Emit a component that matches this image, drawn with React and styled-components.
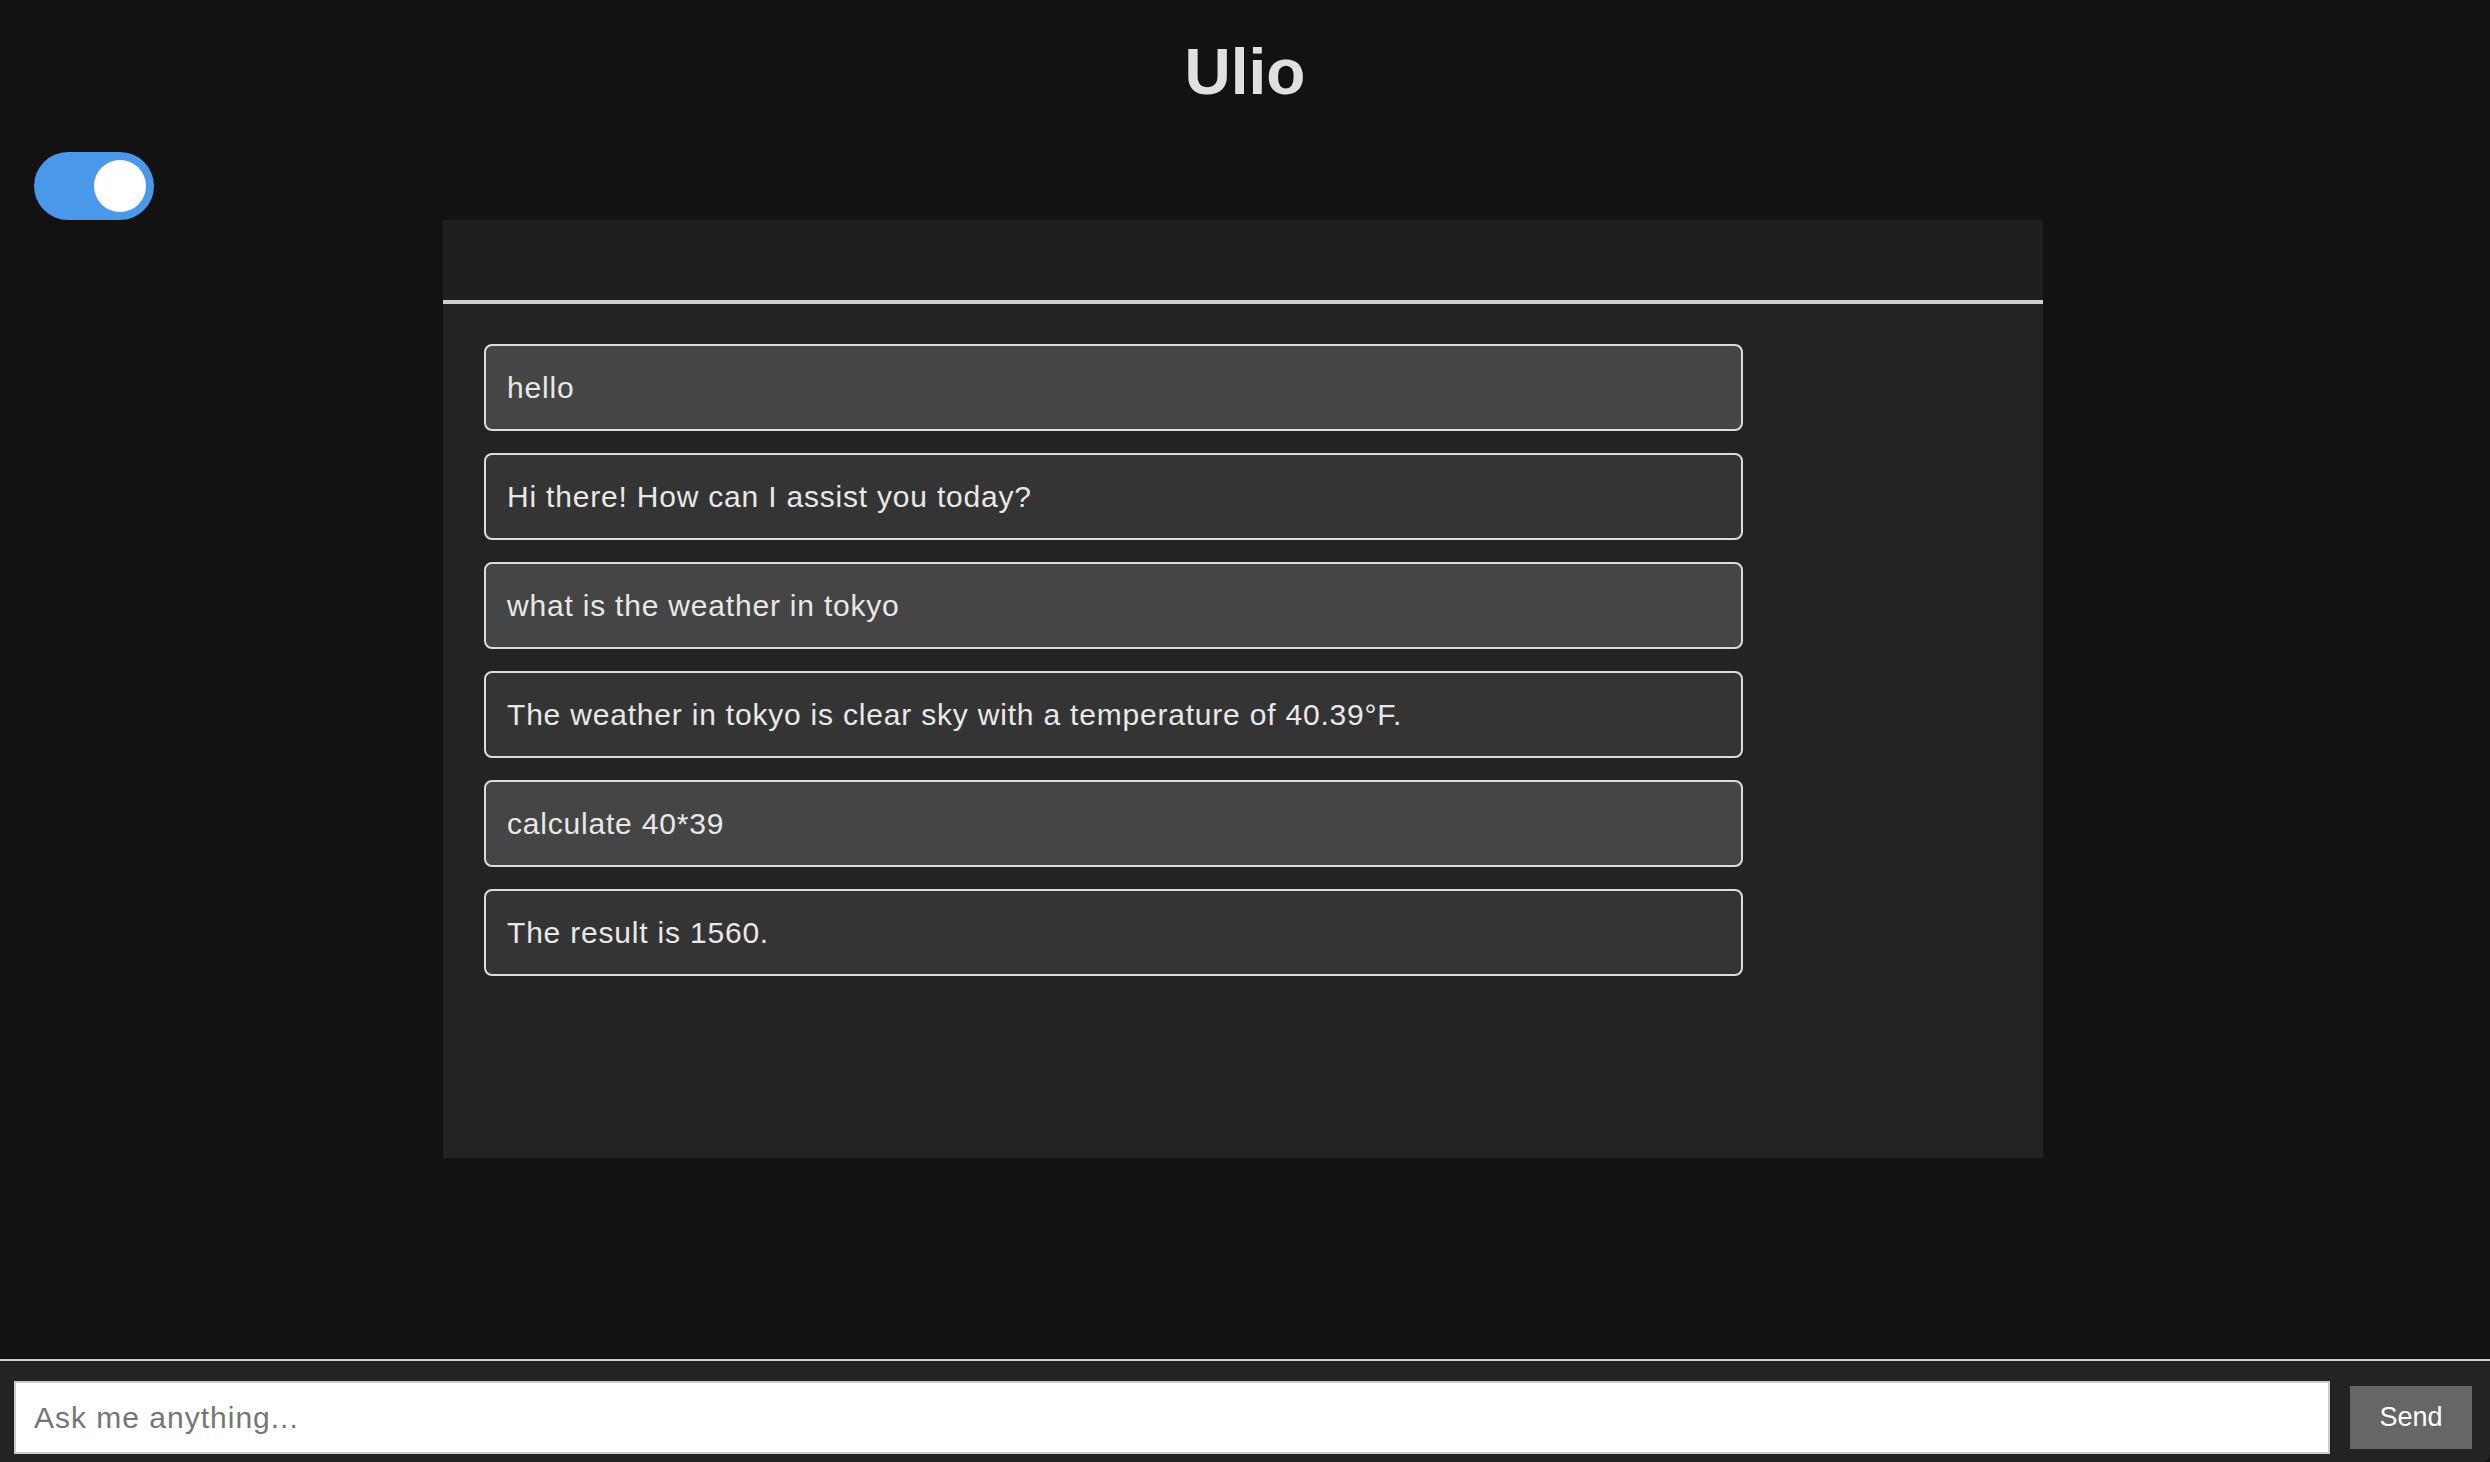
import React from "react";
import styled, { createGlobalStyle } from "styled-components";

const Global = createGlobalStyle`
  html, body { margin: 0; padding: 0; background: #121212; }
  body { font-family: "Liberation Sans", Arial, Helvetica, sans-serif; color: #e6e6e6; }
  * { box-sizing: border-box; }
`;

const Page = styled.div`
  display: flex;
  flex-direction: column;
  height: 100vh;
  overflow: hidden;
`;

const Title = styled.h1`
  margin: 35px 0 0;
  font-size: 64px;
  line-height: 74px;
  font-weight: 700;
  text-align: center;
  color: #e0e0e0;
`;

const ToggleRow = styled.div`
  padding: 43px 0 0 34px;
  display: flex;
`;

const Toggle = styled.button`
  width: 120px;
  height: 68px;
  border-radius: 34px;
  border: none;
  padding: 0 8px;
  background: ${(p) => (p.$on ? "#4a98ea" : "#666")};
  display: flex;
  align-items: center;
  justify-content: ${(p) => (p.$on ? "flex-end" : "flex-start")};
  cursor: pointer;
`;

const Knob = styled.span`
  width: 52px;
  height: 52px;
  border-radius: 50%;
  background: #ffffff;
`;

const Panel = styled.section`
  width: 1600px;
  height: 938px;
  margin-left: calc(50% - 802px);
  display: flex;
  flex-direction: column;
  background: #232323;
`;

const PanelHeader = styled.div`
  height: 84px;
  flex-shrink: 0;
  background: #1f1f1f;
  border-bottom: 4px solid #d0d0d0;
`;

const MessageList = styled.div`
  padding: 40px 41px;
  display: flex;
  flex-direction: column;
  gap: 22px;
  overflow: hidden;
`;

const Bubble = styled.div`
  width: 1259px;
  height: 87px;
  display: flex;
  align-items: center;
  padding: 0 20px 0 21px;
  border: 2px solid #dcdcdc;
  border-radius: 8px;
  background: ${(p) => (p.$user ? "#454545" : "#343434")};
  color: #e8e8e8;
  font-size: 30px;
  letter-spacing: 0.8px;
`;

const Spacer = styled.div`
  flex: 1;
`;

const InputBar = styled.form`
  flex-shrink: 0;
  display: flex;
  align-items: center;
  gap: 20px;
  padding: 20px 18px 8px 14px;
  background: #232323;
  border-top: 2px solid #cfcfcf;
  border-bottom-right-radius: 8px;
`;

const TextInput = styled.input`
  flex: 1;
  height: 73px;
  padding: 0 18px;
  border: 2px solid #cccccc;
  background: #ffffff;
  font-family: "Liberation Sans", Arial, sans-serif;
  font-size: 30px;
  letter-spacing: 1px;
  color: #222;
  outline: none;
  &::placeholder { color: #757575; }
`;

const SendButton = styled.button`
  width: 122px;
  height: 63px;
  border: none;
  background: #666666;
  color: #ffffff;
  font-family: "Liberation Sans", Arial, sans-serif;
  font-size: 27px;
  cursor: pointer;
`;

const messages = [
  { user: true, text: "hello" },
  { user: false, text: "Hi there! How can I assist you today?" },
  { user: true, text: "what is the weather in tokyo" },
  { user: false, text: "The weather in tokyo is clear sky with a temperature of 40.39°F." },
  { user: true, text: "calculate 40*39" },
  { user: false, text: "The result is 1560." },
];

export default function App() {
  return (
    <Page>
      <Global />
      <Title>Ulio</Title>
      <ToggleRow>
        <Toggle $on type="button" aria-label="toggle theme">
          <Knob />
        </Toggle>
      </ToggleRow>
      <Panel>
        <PanelHeader />
        <MessageList>
          {messages.map((m, i) => (
            <Bubble key={i} $user={m.user}>
              {m.text}
            </Bubble>
          ))}
        </MessageList>
      </Panel>
      <Spacer />
      <InputBar onSubmit={(e) => e.preventDefault()}>
        <TextInput placeholder="Ask me anything..." />
        <SendButton type="submit">Send</SendButton>
      </InputBar>
    </Page>
  );
}
